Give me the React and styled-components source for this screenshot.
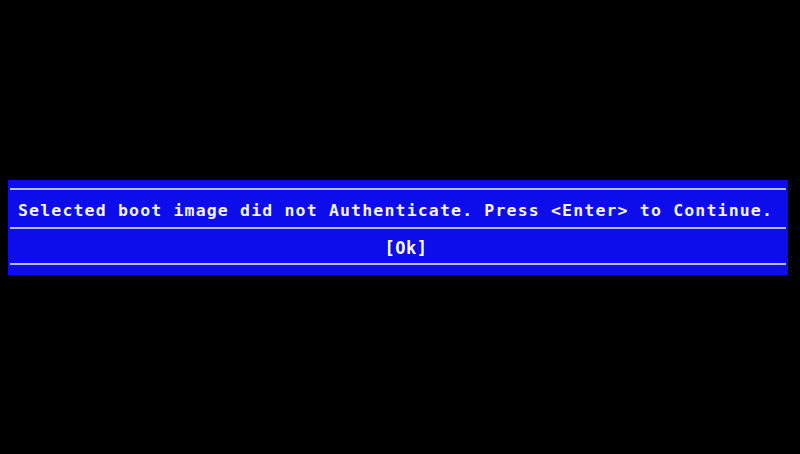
import React from "react";
import styled, { createGlobalStyle } from "styled-components";

const Global = createGlobalStyle`
  html, body {
    margin: 0;
    padding: 0;
    background: #000;
  }
  body {
    width: 800px;
    height: 454px;
    overflow: hidden;
  }
`;

const Screen = styled.div`
  width: 800px;
  height: 454px;
  background: #000;
  padding-top: 180px;
  box-sizing: border-box;
`;

const Dialog = styled.div`
  margin-left: 8px;
  width: 780px;
  height: 95px;
  background: #0c0ced;
  box-sizing: border-box;
  padding: 8px 2px 0 2px;
  display: flex;
  flex-direction: column;
  font-family: "DejaVu Sans Mono", "Liberation Mono", monospace;
  font-weight: bold;
  color: #f4f4ff;
`;

const Rule = styled.div`
  height: 2px;
  background: #c9ceff;
  opacity: 0.9;
`;

const Row = styled.div`
  height: ${(p) => p.$h}px;
  box-sizing: border-box;
  padding-top: 4px;
  display: flex;
  align-items: center;
  justify-content: ${(p) => (p.$center ? "center" : "flex-start")};
  padding-left: ${(p) => p.$pad || 0}px;
  font-size: 16.5px;
  letter-spacing: 1.17px;
  white-space: nowrap;
`;

const Button = styled.span`
  margin-left: 16px;
  letter-spacing: 0.5px;
  font-size: 17px;
  color: #ffffff;
`;

export default function App() {
  return (
    <>
      <Global />
      <Screen>
        <Dialog>
          <Rule />
          <Row $h={37} $pad={8}>
            Selected boot image did not Authenticate. Press &lt;Enter&gt; to Continue.
          </Row>
          <Rule />
          <Row $h={34} $center>
            <Button>[Ok]</Button>
          </Row>
          <Rule />
        </Dialog>
      </Screen>
    </>
  );
}
